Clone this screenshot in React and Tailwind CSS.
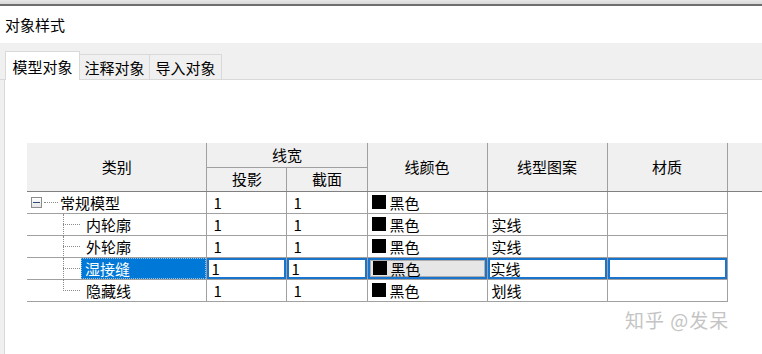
import React from 'react';

const font = { fontFamily: '"Noto Sans CJK SC", "Noto Sans", sans-serif' };

const rows = [
  { name: '常规模型', proj: '1', cut: '1', color: '黑色', pattern: '', root: true },
  { name: '内轮廓', proj: '1', cut: '1', color: '黑色', pattern: '实线' },
  { name: '外轮廓', proj: '1', cut: '1', color: '黑色', pattern: '实线' },
  { name: '湿接缝', proj: '1', cut: '1', color: '黑色', pattern: '实线', selected: true },
  { name: '隐藏线', proj: '1', cut: '1', color: '黑色', pattern: '划线', last: true },
];

const Swatch = () => <span className="inline-block w-[14px] h-[14px] bg-black mr-[4px] shrink-0" />;

const App = () => {
  return (
    <div className="w-[762px] h-[354px] bg-white overflow-hidden text-[15px] text-black" style={font}>
      {/* window top edge */}
      <div className="h-[6px] bg-gradient-to-b from-[#e8e8e8] to-[#d8d8d8] border-b-[2px] border-[#6e6e6e]" />

      {/* title */}
      <div className="h-[37px] flex items-center pl-[5px] leading-none">对象样式</div>

      {/* tab strip */}
      <div className="h-[37px] bg-[#f0f0f0] flex items-end pl-[5px] border-b border-[#d9d9d9] relative">
        <div className="h-[29px] w-[75px] bg-white border border-b-0 border-[#d9d9d9] flex items-center justify-center leading-none relative top-[1px] z-10">
          模型对象
        </div>
        <div className="h-[25px] w-[70px] border border-l-0 border-b-0 border-[#d9d9d9] flex items-center justify-center leading-none">
          注释对象
        </div>
        <div className="h-[25px] w-[72px] border border-l-0 border-b-0 border-[#d9d9d9] flex items-center justify-center leading-none">
          导入对象
        </div>
      </div>

      {/* panel */}
      <div className="flex h-[274px]">
        <div className="w-[5px] bg-[#f0f0f0] border-r border-[#d9d9d9]" />
        <div className="flex-1 pt-[63px] pl-[22px] relative">
          <table className="border-collapse table-fixed" style={{ width: 735 }}>
            <colgroup>
              <col style={{ width: 180 }} />
              <col style={{ width: 80 }} />
              <col style={{ width: 80 }} />
              <col style={{ width: 120 }} />
              <col style={{ width: 120 }} />
              <col style={{ width: 120 }} />
              <col style={{ width: 35 }} />
            </colgroup>
            <thead>
              <tr className="h-[24px]">
                <th rowSpan={2} className="bg-[#f0f0f0] font-normal border-r border-[#a0a0a0] border-b border-b-[#808080]">类别</th>
                <th colSpan={2} className="bg-[#f0f0f0] font-normal border-r border-b border-[#a0a0a0]">线宽</th>
                <th rowSpan={2} className="bg-[#f0f0f0] font-normal border-r border-[#a0a0a0] border-b border-b-[#808080]">线颜色</th>
                <th rowSpan={2} className="bg-[#f0f0f0] font-normal border-r border-[#a0a0a0] border-b border-b-[#808080]">线型图案</th>
                <th rowSpan={2} className="bg-[#f0f0f0] font-normal border-r border-[#a0a0a0] border-b border-b-[#808080]">材质</th>
                <th rowSpan={2} className="bg-[#f0f0f0] font-normal border-b border-b-[#808080]"></th>
              </tr>
              <tr className="h-[24px]">
                <th className="bg-[#f0f0f0] font-normal border-r border-[#a0a0a0] border-b border-b-[#808080]">投影</th>
                <th className="bg-[#f0f0f0] font-normal border-r border-[#a0a0a0] border-b border-b-[#808080]">截面</th>
              </tr>
            </thead>
            <tbody>
              {rows.map((r, i) => {
                const sel = r.selected;
                const cell = sel
                  ? 'border-b border-r border-[#a0a0a0] p-0 shadow-[inset_0_0_0_2px_#1874cd]'
                  : 'border-b border-r border-[#a0a0a0] p-0';
                return (
                  <tr key={i} className="h-[22px] leading-none">
                    <td className="border-b border-r border-[#a0a0a0] p-0 relative">
                      {r.root ? (
                        <div className="flex items-center h-[21px] pl-[4px]">
                          <span className="w-[11px] h-[11px] border border-[#8c8c8c] bg-gradient-to-b from-white to-[#e4e4e4] flex items-center justify-center">
                            <span className="block w-[7px] h-[1px] bg-[#2b4a7a]" />
                          </span>
                          <span className="w-[14px] border-t border-dotted border-[#8a8a8a] ml-[2px]" />
                          <span className="ml-[2px]">{r.name}</span>
                        </div>
                      ) : (
                        <div className="flex items-center h-[21px] pl-[36px]">
                          <span className={`absolute left-[36px] top-0 border-l border-dotted border-[#8a8a8a] ${r.last ? 'h-[11px]' : 'h-[22px]'}`} />
                          <span className="w-[17px] border-t border-dotted border-[#8a8a8a]" />
                          {sel ? (
                            <span className="ml-[1px] flex-1 h-[21px] bg-[#0078d7] text-white flex items-center pl-[4px] outline outline-1 outline-dotted outline-[#9bbfe6] -outline-offset-1">
                              {r.name}
                            </span>
                          ) : (
                            <span className="ml-[6px]">{r.name}</span>
                          )}
                        </div>
                      )}
                    </td>
                    <td className={cell}>
                      <div className={sel ? 'pl-[4px]' : 'pl-[6px]'}>{r.proj}</div>
                    </td>
                    <td className={cell}>
                      <div className={sel ? 'pl-[4px]' : 'pl-[6px]'}>{r.cut}</div>
                    </td>
                    <td className={cell}>
                      {sel ? (
                        <div className="mx-[2px] h-[17px] bg-[#e6e6e6] border border-[#adadad] flex items-center pl-[2px]">
                          <Swatch />
                          {r.color}
                        </div>
                      ) : (
                        <div className="flex items-center pl-[4px]">
                          <Swatch />
                          {r.color}
                        </div>
                      )}
                    </td>
                    <td className={cell}>
                      <div className={sel ? 'pl-[3px]' : 'pl-[4px]'}>{r.pattern}</div>
                    </td>
                    <td className={cell}></td>
                    <td className="p-0"></td>
                  </tr>
                );
              })}
            </tbody>
          </table>

          {/* watermark */}
          <div className="absolute left-[620px] top-[226px] text-[19px] text-[#c4c4c4] tracking-[1px]">知乎 @发呆</div>
        </div>
      </div>
    </div>
  );
};

export default App;
